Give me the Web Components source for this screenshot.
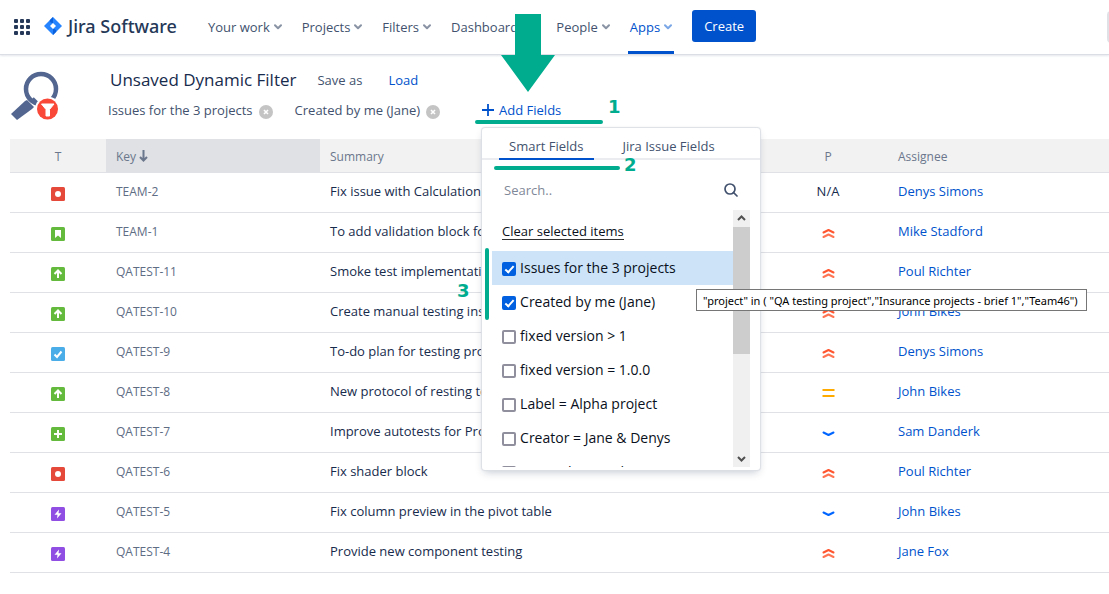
<!DOCTYPE html>
<html lang="en">
<head>
<meta charset="utf-8">
<meta name="viewport" content="width=device-width, initial-scale=1">
<title>Dynamic Filter</title>
<style>
    body {
        margin: 0;
        overflow-x: hidden;
        background: #fff;
        color: #172b4d;
        font: 13px/20px "Open Sans", "Noto Sans", sans-serif;
        --blue: #0052cc;
        --text: #42526e;
        --line: #dfe1e6;
        --mark: #00ac8e;
    }
</style>
</head>
<body>
<filter-page></filter-page>

<script>
(function(){
    // attaches an open shadow root filled from a template string
    function render(host, html) {
        const template = document.createElement("template");
        template.innerHTML = html;
        host.attachShadow({mode: "open"}).appendChild(template.content.cloneNode(true));
    }

    class NavItem extends HTMLElement {
        constructor() {
            super();
            render(this, `
                <style>
                    :host { display: flex; height: 54px; color: var(--text); }
                    a {
                        display: flex;
                        align-items: center;
                        gap: 4px;
                        color: inherit;
                        text-decoration: none;
                        box-sizing: border-box;
                        border-top: 3px solid transparent;
                        border-bottom: 3px solid transparent;
                    }
                    svg { color: #8993a4; }
                    :host([active]) { color: var(--blue); }
                    :host([active]) a { border-bottom-color: var(--blue); padding: 0 2px; margin: 0 -2px; }
                    :host([active]) svg { color: #7ba7e6; }
                </style>
                <a href="#"><slot></slot>
                    <svg width="8" height="8" viewBox="0 0 8 8"><path d="M1 2.3 4 5.3 7 2.3" fill="none" stroke="currentColor" stroke-width="2" stroke-linecap="round" stroke-linejoin="round"/></svg>
                </a>
            `);
        }
    }
    customElements.define("nav-item", NavItem);

    class AppHeader extends HTMLElement {
        constructor() {
            super();
            render(this, `
                <style>
                    :host {
                        display: flex;
                        align-items: center;
                        height: 54px;
                        padding-left: 14px;
                        border-bottom: 1px solid #dcdee5;
                        box-shadow: 0 1px 2px #e4e6ec;
                    }
                    .apps { display: flex; padding: 0; border: 0; background: none; }
                    .logo { display: flex; align-items: center; gap: 6px; margin-left: 13px; padding-bottom: 2px; color: #253858; font: 500 18px/24px "Noto Sans", sans-serif; text-decoration: none; }
                    nav { display: flex; gap: 20px; margin-left: 31px; }
                    .create { height: 32px; margin: 0 0 2px 20px; padding: 0 12px; border: 0; border-radius: 3px; background: var(--blue); color: #fff; font: inherit; }
                    .search { flex: none; box-sizing: border-box; width: 160px; height: 32px; margin: 0 -158px 0 auto; border: 2px solid var(--line); border-radius: 4px; }
                </style>
                <button class="apps" aria-label="Switch to">
                    <svg width="17" height="17" viewBox="0 0 17 17" fill="#253858">
                        <g id="row"><rect width="4" height="4" rx="1"/><rect x="6" width="4" height="4" rx="1"/><rect x="12" width="4" height="4" rx="1"/></g>
                        <use href="#row" y="6"/><use href="#row" y="12"/>
                    </svg>
                </button>
                <a class="logo" href="#">
                    <svg width="18" height="18" viewBox="0 0 18 18">
                        <path d="M9 0 18 9 9 18 0 9Z" fill="#2684ff"/>
                        <path d="M9 0 5.7 3.3Q5.7 5.7 9 6.2ZM9 18 12.3 14.7Q12.3 12.3 9 11.8Z" fill="#0b61db"/>
                        <path d="M9 6 12 9 9 12 6 9Z" fill="#fff"/>
                    </svg>
                    Jira Software
                </a>
                <nav>
                    <nav-item>Your work</nav-item>
                    <nav-item>Projects</nav-item>
                    <nav-item>Filters</nav-item>
                    <nav-item>Dashboards</nav-item>
                    <nav-item>People</nav-item>
                    <nav-item active>Apps</nav-item>
                </nav>
                <button class="create">Create</button>
                <input class="search" type="search" aria-label="Search">
            `);
        }
    }
    customElements.define("app-header", AppHeader);

    class FilterChip extends HTMLElement {
        constructor() {
            super();
            render(this, `
                <style>
                    :host { display: flex; align-items: center; gap: 6px; color: var(--text); }
                    button { display: flex; padding: 3px 0 0; border: 0; background: none; }
                </style>
                <slot></slot>
                <button aria-label="Remove">
                    <svg width="14" height="14" viewBox="0 0 14 14"><circle cx="7" cy="7" r="7" fill="#c4c4c4"/><path d="M5 5 9 9M9 5 5 9" stroke="#fff" stroke-width="1.6"/></svg>
                </button>
            `);
        }
    }
    customElements.define("filter-chip", FilterChip);

    class CheckItem extends HTMLElement {
        constructor() {
            super();
            render(this, `
                <style>
                    :host { display: block; color: #091020; font-size: 14px; }
                    :host([hovered]) { background: #cce3f8; }
                    label { display: flex; align-items: center; gap: 4px; height: 34px; padding-left: 10px; white-space: nowrap; }
                    input {
                        appearance: none;
                        flex: none;
                        display: grid;
                        place-items: center;
                        width: 14px;
                        height: 14px;
                        margin: 2px 0 0;
                        border: 2px solid #8f8f9d;
                        border-radius: 2px;
                        background: #fff;
                        box-sizing: border-box;
                    }
                    input:checked { border-color: #0060df; background: #0060df; }
                    input:checked::before {
                        content: "";
                        width: 3px;
                        height: 7px;
                        margin-top: -2px;
                        border: solid #fff;
                        border-width: 0 2px 2px 0;
                        transform: rotate(42deg);
                    }
                </style>
                <label><input type="checkbox"><span><slot></slot></span></label>
            `);
            this.shadowRoot.querySelector("input").checked = this.hasAttribute("checked");
        }
    }
    customElements.define("check-item", CheckItem);

    class FieldsPopup extends HTMLElement {
        constructor() {
            super();
            render(this, `
                <style>
                    :host {
                        display: block;
                        box-sizing: border-box;
                        width: 278px;
                        border-radius: 3px;
                        background: #fff;
                        box-shadow: 0 0 1px 1px #dcdfe5, 0 4px 8px -2px #091e4240;
                    }
                    .tabs { display: flex; gap: 19px; padding: 0 17px; border-bottom: 2px solid #ebecf0; }
                    .tabs button { height: 32px; margin-bottom: -2px; padding: 5px 10px 0; border: 0; border-bottom: 2px solid transparent; background: none; color: var(--text); font: inherit; white-space: nowrap; }
                    .tabs .on { border-color: var(--blue); }
                    .search { display: flex; align-items: center; height: 20px; padding: 20px 22px 10px; }
                    .search input { flex: 1; min-width: 0; padding: 0; border: 0; outline: 0; background: none; color: inherit; font: inherit; }
                    .search input::placeholder { color: #7f8898; opacity: 1; }
                    .scroller { display: grid; grid-template-columns: 1fr 17px; height: 257px; margin: 0 10px 3px; }
                    .list { overflow: hidden; }
                    .clear { height: 18px; margin: 12px 10px 11px; padding: 0; border: 0; border-bottom: 1px solid #333; background: none; color: #091020; font: inherit; line-height: 16px; }
                    .bar { display: flex; flex-direction: column; align-items: center; background: #f0f0f0; }
                    .bar svg { flex: none; }
                    .thumb { width: 17px; height: 127px; margin-bottom: auto; background: #cdcdcd; }
                </style>
                <div class="tabs" role="tablist">
                    <button class="on" role="tab" aria-selected="true">Smart Fields</button>
                    <button role="tab">Jira Issue Fields</button>
                </div>
                <div class="search">
                    <input type="text" placeholder="Search.." aria-label="Search fields">
                    <svg width="14" height="14" viewBox="0 0 14 14" fill="none" stroke="#42526e" stroke-width="1.7"><circle cx="6" cy="6" r="5"/><path d="M9.5 9.5 13 13" stroke-linecap="round"/></svg>
                </div>
                <div class="scroller">
                    <div class="list">
                        <button class="clear">Clear selected items</button>
                        <check-item checked hovered>Issues for the 3 projects</check-item>
                        <check-item checked>Created by me (Jane)</check-item>
                        <check-item>fixed version &gt; 1</check-item>
                        <check-item>fixed version = 1.0.0</check-item>
                        <check-item>Label = Alpha project</check-item>
                        <check-item>Creator = Jane &amp; Denys</check-item>
                        <check-item>Created yesterday</check-item>
                    </div>
                    <div class="bar" aria-hidden="true">
                        <svg width="17" height="17" viewBox="0 0 17 17"><path d="M5 10 8.5 6.5 12 10" fill="none" stroke="#505050" stroke-width="2"/></svg>
                        <div class="thumb"></div>
                        <svg width="17" height="17" viewBox="0 0 17 17"><path d="M5 7 8.5 10.5 12 7" fill="none" stroke="#505050" stroke-width="2"/></svg>
                    </div>
                </div>
            `);
        }
    }
    customElements.define("fields-popup", FieldsPopup);

    class FilterBar extends HTMLElement {
        constructor() {
            super();
            render(this, `
                <style>
                    :host { display: flex; gap: 48px; height: 84px; padding-left: 10px; box-sizing: border-box; }
                    .icon { flex: none; margin-top: 16px; }
                    .title, .fields { display: flex; align-items: center; white-space: nowrap; }
                    .title { height: 30px; padding: 10px 0 0 2px; }
                    h1 { margin: 0; font-size: 17px; font-weight: 400; line-height: 24px; }
                    .save, .load { padding: 0; border: 0; background: none; color: var(--text); font: inherit; }
                    .save { margin-left: 21px; }
                    .load { margin-left: 26px; color: var(--blue); }
                    .fields { height: 30px; gap: 22px; }
                    .adder { position: relative; margin-left: 20px; }
                    .add { display: flex; align-items: center; gap: 5px; padding: 0; border: 0; background: none; color: var(--blue); font: inherit; }
                    .adder fields-popup { position: absolute; top: 28px; left: 0; z-index: 1; }
                </style>
                <svg class="icon" width="50" height="50" viewBox="0 0 50 50">
                    <circle cx="31" cy="18" r="15" fill="none" stroke="#536690" stroke-width="4.500"/>
                    <path d="M26 32 22 28" stroke="#536690" stroke-width="5"/>
                    <path d="M1 43 15 30 17 29 24 36 22 38 7 49Z" fill="#536690"/>
                    <circle cx="37.500" cy="38" r="12.500" fill="#fff"/>
                    <circle cx="37.500" cy="38" r="10.500" fill="#f94837"/>
                    <path d="M31.500 33H44L39.500 38.500V45H36V38.500Z" fill="#fff" stroke="#fff" stroke-linejoin="round"/>
                </svg>
                <div>
                    <div class="title">
                        <h1>Unsaved Dynamic Filter</h1>
                        <button class="save">Save as</button>
                        <button class="load">Load</button>
                    </div>
                    <div class="fields">
                        <filter-chip>Issues for the 3 projects</filter-chip>
                        <filter-chip>Created by me (Jane)</filter-chip>
                        <div class="adder">
                            <button class="add">
                                <svg width="12" height="12" viewBox="0 0 12 12"><path d="M6 0V12M0 6H12" stroke="currentColor" stroke-width="1.8"/></svg>
                                Add Fields
                            </button>
                            <fields-popup></fields-popup>
                        </div>
                    </div>
                </div>
            `);
        }
    }
    customElements.define("filter-bar", FilterBar);

    const types = {
        bug: ["#e5493a", `<circle cx="7" cy="7" r="3" fill="#fff"/>`],
        story: ["#63ba3c", `<path d="M4 3H10V11L7 8.5 4 11Z" fill="#fff"/>`],
        improvement: ["#63ba3c", `<path d="M7 11V4M3.5 7 7 3.5 10.5 7" fill="none" stroke="#fff" stroke-width="2"/>`],
        task: ["#4bade8", `<path d="M3.5 7.5 6 10 10.5 4.5" fill="none" stroke="#fff" stroke-width="2"/>`],
        feature: ["#63ba3c", `<path d="M7 3V11M3 7H11" stroke="#fff" stroke-width="2"/>`],
        epic: ["#904ee2", `<path d="M8 2.5 3.5 7.8H6.5L6 11.5 10.5 6.3H7.5Z" fill="#fff"/>`]
    };

    class TypeIcon extends HTMLElement {
        constructor() {
            super();
            const [color, mark] = types[this.getAttribute("type")];
            render(this, `
                <style>:host { display: inline-block; vertical-align: top; } svg { display: block; }</style>
                <svg width="14" height="14" viewBox="0 0 14 14"><rect width="14" height="14" rx="1.5" fill="${color}"/>${mark}</svg>
            `);
        }
    }
    customElements.define("type-icon", TypeIcon);

    const priorities = {
        highest: `<path d="M1.500 5.500 6.500 3 11.500 5.500" stroke="#ff5630"/><path d="M1.500 10 6.500 7.500 11.500 10" stroke="#ff7452"/>`,
        medium: `<path d="M.5 3H12.5M.5 9H12.5" stroke="#ffab00" stroke-linecap="butt"/>`,
        low: `<path d="M1.500 5.500 6.500 8 11.500 5.500" stroke="#0065ff"/>`
    };

    class PriorityIcon extends HTMLElement {
        constructor() {
            super();
            render(this, `
                <style>:host { display: inline-block; vertical-align: top; } svg { display: block; }</style>
                <svg width="13" height="13" viewBox="0 0 13 13" fill="none" stroke-width="2" stroke-linecap="round" stroke-linejoin="round">${priorities[this.getAttribute("level")]}</svg>
            `);
        }
    }
    customElements.define("priority-icon", PriorityIcon);

    const issues = [
        ["bug", "TEAM-2", "Fix issue with Calculation", "", "Denys Simons"],
        ["story", "TEAM-1", "To add validation block for", "highest", "Mike Stadford"],
        ["improvement", "QATEST-11", "Smoke test implementation", "highest", "Poul Richter"],
        ["improvement", "QATEST-10", "Create manual testing instruction", "highest", "John Bikes"],
        ["task", "QATEST-9", "To-do plan for testing projects", "highest", "Denys Simons"],
        ["improvement", "QATEST-8", "New protocol of resting tests", "medium", "John Bikes"],
        ["feature", "QATEST-7", "Improve autotests for Projects", "low", "Sam Danderk"],
        ["bug", "QATEST-6", "Fix shader block", "highest", "Poul Richter"],
        ["epic", "QATEST-5", "Fix column preview in the pivot table", "low", "John Bikes"],
        ["epic", "QATEST-4", "Provide new component testing", "highest", "Jane Fox"]
    ];

    class IssueTable extends HTMLElement {
        constructor() {
            super();
            const rows = issues.map(([type, key, summary, level, name]) => `
                <tr>
                    <td class="mid"><type-icon type="${type}"></type-icon></td>
                    <td class="key">${key}</td>
                    <td>${summary}</td>
                    <td class="mid">${level ? `<priority-icon level="${level}"></priority-icon>` : "N/A"}</td>
                    <td><a href="#">${name}</a></td>
                </tr>`).join("");
            render(this, `
                <style>
                    :host { display: block; padding-left: 10px; }
                    table { width: 100%; table-layout: fixed; border-collapse: separate; border-spacing: 0; }
                    .type { width: 96px; }
                    .id { width: 214px; }
                    .prio { width: 120px; }
                    .user { width: 221px; }
                    th, td { box-sizing: border-box; padding: 0 10px; border-bottom: 1px solid var(--line); text-align: left; white-space: nowrap; }
                    th { height: 34px; padding-top: 2px; background: #f2f2f2; color: #6b778c; font-size: 12px; font-weight: 400; }
                    th.sorted { background: #dfe1e5; }
                    th svg { vertical-align: -1px; }
                    td { height: 40px; padding-bottom: 3px; }
                    .mid { text-align: center; padding-left: 0; padding-right: 0; }
                    .mid type-icon, .mid priority-icon { margin-top: 6px; }
                    td.key { padding-bottom: 1px; color: #5e6c84; font-size: 12px; }
                    a { color: var(--blue); text-decoration: none; }
                </style>
                <table>
                    <colgroup><col class="type"><col class="id"><col><col class="prio"><col class="user"></colgroup>
                    <thead>
                        <tr>
                            <th class="mid">T</th>
                            <th class="sorted">Key <svg width="9" height="12" viewBox="0 0 9 12"><path d="M4.5 0V10M1 7 4.5 10.5 8 7" fill="none" stroke="#6b778c" stroke-width="2"/></svg></th>
                            <th>Summary</th>
                            <th class="mid">P</th>
                            <th>Assignee</th>
                        </tr>
                    </thead>
                    <tbody>${rows}</tbody>
                </table>
            `);
        }
    }
    customElements.define("issue-table", IssueTable);

    // arrow, strokes and step numbers laid over the page
    class GuideMarks extends HTMLElement {
        constructor() {
            super();
            render(this, `
                <style>
                    :host { position: absolute; inset: 0; z-index: 2; overflow: hidden; pointer-events: none; color: var(--mark); font: bold 18px/20px "DejaVu Sans", sans-serif; }
                    svg, span { position: absolute; }
                    svg { left: 0; top: 0; }
                    .one { left: 608px; top: 97px; }
                    .two { left: 624px; top: 155px; }
                    .three { left: 457px; top: 281px; }
                    .tip { left: 696px; top: 289px; box-sizing: border-box; height: 22px; padding: 0 8px 0 6px; border: 1px solid #767676; background: #fff; color: #000; font: 11px/21px "Noto Sans", sans-serif; white-space: nowrap; }
                </style>
                <svg width="660" height="330" viewBox="0 0 660 330" fill="currentColor">
                    <path d="M515 14H541V55H555L528 92 501 55H515Z"/>
                    <path d="M477 122H601M496 168H618M487 250V318" stroke="currentColor" stroke-width="4" stroke-linecap="round"/>
                </svg>
                <span class="one">1</span>
                <span class="two">2</span>
                <span class="three">3</span>
                <span class="tip" role="tooltip">"project" in ( "QA testing project","Insurance projects - brief 1","Team46")</span>
            `);
        }
    }
    customElements.define("guide-marks", GuideMarks);

    class FilterPage extends HTMLElement {
        constructor() {
            super();
            render(this, `
                <style>:host { display: block; position: relative; min-height: 100vh; overflow-x: clip; }</style>
                <app-header></app-header>
                <main>
                    <filter-bar></filter-bar>
                    <issue-table></issue-table>
                </main>
                <guide-marks></guide-marks>
            `);
        }
    }
    customElements.define("filter-page", FilterPage);
})();
</script>
</body>
</html>
